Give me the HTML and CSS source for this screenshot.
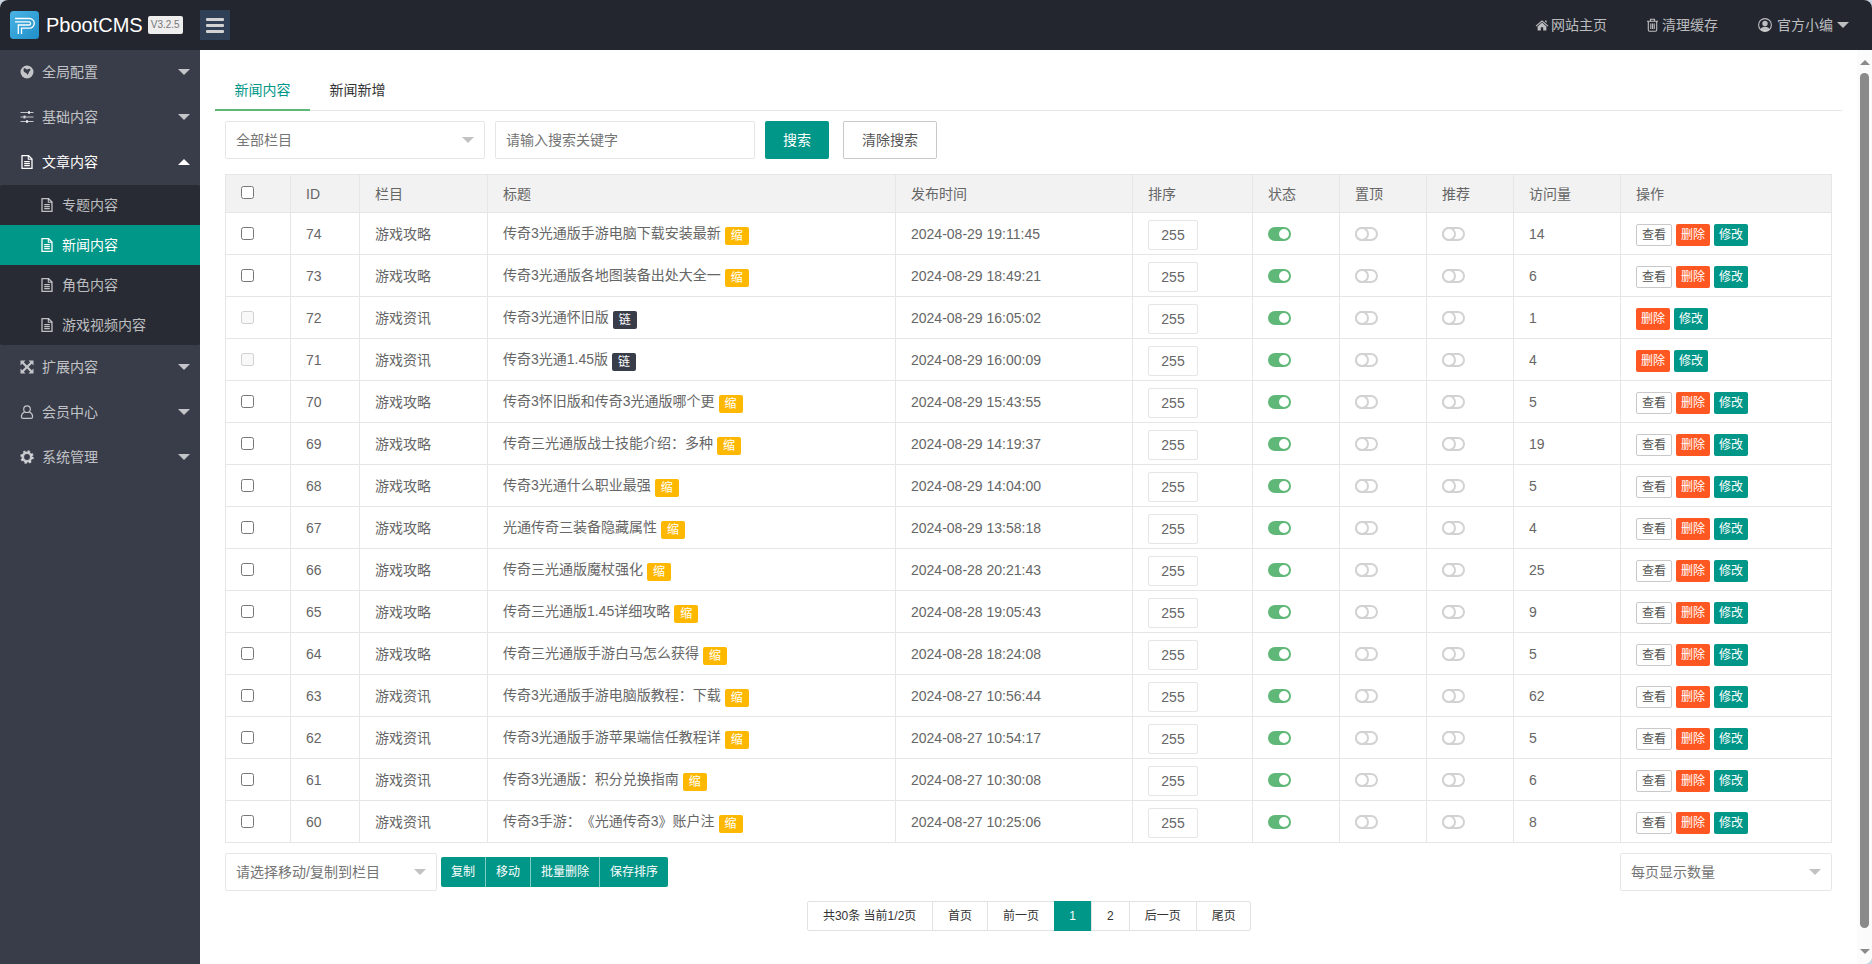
FILE: index.html
```html
<!DOCTYPE html>
<html lang="zh-CN">
<head>
<meta charset="utf-8">
<title>PbootCMS</title>
<link rel="stylesheet" href="styles.css">
</head>
<body>
<svg class="sprite" xmlns="http://www.w3.org/2000/svg">
  <symbol id="i-file" viewBox="0 0 14 14"><path d="M2 .7h6.6L12 4v9.3H2z" fill="none" stroke="currentColor" stroke-width="1.3"/><path d="M8.3.7v3.6H12M4.2 6.6h5.6M4.2 8.6h5.6M4.2 10.6h5.6" fill="none" stroke="currentColor" stroke-width="1.1"/></symbol>
  <symbol id="i-globe" viewBox="0 0 14 14"><circle cx="7" cy="7" r="6.5" fill="currentColor"/><path d="M3.600 3.600c1-.6 2-.2 2.600.5.300.5.900.4 1.500.1.800-.5 1.700-.8 2.500-.3.500 1-.1 2-.9 2.700-.4.400-.3 1-.6 1.500-.4.800-.9 1.500-1.500 1.800-.3-.7-.4-1.400-1-1.900C5.400 7.600 3.900 7.300 3.600 6z" fill="#393d49"/></symbol>
  <symbol id="i-sliders" viewBox="0 0 14 14"><path d="M.5 2.500h13M.5 7h13M.5 11.500h13" stroke="currentColor" stroke-width="1.100" fill="none"/><path d="M8 1h2v3H8zM3.500 5.500h2v3h-2zM6 10h2v3H6z" fill="currentColor"/></symbol>
  <symbol id="i-arrows" viewBox="0 0 14 14"><path d="M.5.500h5L3.800 2.200 7 5.400 10.200 2.200 8.500.500h5v5l-1.700-1.700L8.600 7l3.200 3.200 1.700-1.700v5h-5l1.700-1.700L7 8.600l-3.200 3.200 1.700 1.700h-5v-5l1.700 1.700L5.400 7 2.200 3.800.500 5.500z" fill="currentColor"/></symbol>
  <symbol id="i-user" viewBox="0 0 14 14"><circle cx="7" cy="4.200" r="3.300" fill="none" stroke="currentColor" stroke-width="1.200"/><path d="M4.300 7.200C2.400 8 1.400 9.600 1.400 11.400c0 1.200.6 1.900 1.700 1.900h7.800c1.100 0 1.700-.7 1.700-1.900 0-1.800-1-3.400-2.900-4.200" fill="none" stroke="currentColor" stroke-width="1.200"/></symbol>
  <symbol id="i-cog" viewBox="0 0 14 14"><circle cx="7" cy="7" r="4.200" fill="none" stroke="currentColor" stroke-width="2.600"/><circle cx="7" cy="7" r="5.800" fill="none" stroke="currentColor" stroke-width="2" stroke-dasharray="2.300 2.250"/></symbol>
  <symbol id="i-home" viewBox="0 0 14 14"><path d="M7 2.200 13.400 7.800l-.7.800L7 3.700 1.300 8.600l-.7-.8z" fill="currentColor"/><path d="M2.600 8.400 7 4.600l4.400 3.800V12.500H8.200V9.300H5.800v3.200H2.600zM10 2.500h1.600v2.400L10 3.600z" fill="currentColor"/></symbol>
  <symbol id="i-trash" viewBox="0 0 11 14"><path d="M0 3.200h11M3.500 3V1.300h4V3M1.300 3.500v8.300c0 .8.500 1.400 1.200 1.400h6c.7 0 1.200-.6 1.200-1.400V3.500M3.800 5.500v5.500M5.500 5.500v5.500M7.200 5.500v5.500" fill="none" stroke="currentColor" stroke-width="1.100"/></symbol>
  <symbol id="i-usercircle" viewBox="0 0 14 14"><circle cx="7" cy="7" r="6.400" fill="none" stroke="currentColor" stroke-width="1.100"/><circle cx="7" cy="5.500" r="2.700" fill="currentColor"/><path d="M2.600 11.400C3 9.600 4.300 8.700 7 8.700s4 .9 4.400 2.700C10.200 12.600 8.700 13.200 7 13.200s-3.200-.6-4.400-1.800z" fill="currentColor"/></symbol>
</svg>
<div class="app">
  <header class="topbar">
    <div class="brand">
      <svg class="logo" viewBox="0 0 29 28" xmlns="http://www.w3.org/2000/svg">
        <defs><linearGradient id="logo-grad" x1="0" y1="0" x2="1" y2="1"><stop offset="0" stop-color="#4bb4e6"/><stop offset="1" stop-color="#1f8fc8"/></linearGradient></defs>
        <rect width="29" height="28" rx="3.500" fill="url(#logo-grad)"/>
        <path d="M5 7.500h14.500a4.800 4.800 0 0 1 0 9.600H11.500V23M5 10.800h14a1.600 1.600 0 0 1 0 3.200H8.300v9" fill="none" stroke="#fff" stroke-width="1.300"/>
      </svg>
      <span class="brand-name">PbootCMS</span>
      <span class="brand-ver">V3.2.5</span>
    </div>
    <button class="menu-toggle" type="button" aria-label="菜单"><span></span><span></span><span></span></button>
    <nav class="top-links">
      <a class="top-link"><svg class="icon"><use href="#i-home"/></svg>网站主页</a>
      <a class="top-link trash"><svg class="icon"><use href="#i-trash"/></svg>清理缓存</a>
      <a class="top-link user"><svg class="icon"><use href="#i-usercircle"/></svg>官方小编<i class="caret"></i></a>
    </nav>
  </header>
  <div class="body-row">
    <aside class="sidebar">
      <a class="nav-item"><svg class="icon"><use href="#i-globe"/></svg><span>全局配置</span><i class="caret"></i></a>
      <a class="nav-item"><svg class="icon"><use href="#i-sliders"/></svg><span>基础内容</span><i class="caret"></i></a>
      <a class="nav-item open"><svg class="icon"><use href="#i-file"/></svg><span>文章内容</span><i class="caret up"></i></a>
      <div class="subnav">
        <a class="sub-item"><svg class="icon"><use href="#i-file"/></svg>专题内容</a>
        <a class="sub-item active"><svg class="icon"><use href="#i-file"/></svg>新闻内容</a>
        <a class="sub-item"><svg class="icon"><use href="#i-file"/></svg>角色内容</a>
        <a class="sub-item"><svg class="icon"><use href="#i-file"/></svg>游戏视频内容</a>
      </div>
      <a class="nav-item"><svg class="icon"><use href="#i-arrows"/></svg><span>扩展内容</span><i class="caret"></i></a>
      <a class="nav-item"><svg class="icon"><use href="#i-user"/></svg><span>会员中心</span><i class="caret"></i></a>
      <a class="nav-item"><svg class="icon"><use href="#i-cog"/></svg><span>系统管理</span><i class="caret"></i></a>
    </aside>
    <main class="main">
      <div class="tabs">
        <a class="tab active">新闻内容</a>
        <a class="tab">新闻新增</a>
      </div>
      <div class="panel">
        <form class="filters">
          <div class="select-box w-260"><span>全部栏目</span><i class="caret"></i></div>
          <input class="text-input" type="text" placeholder="请输入搜索关键字">
          <button class="btn btn-teal" type="button">搜索</button>
          <button class="btn btn-plain" type="button">清除搜索</button>
        </form>
        <table class="grid">
          <colgroup>
            <col class="c-check"><col class="c-id"><col class="c-cat"><col class="c-title"><col class="c-date"><col class="c-sort"><col class="c-flag"><col class="c-flag"><col class="c-flag"><col class="c-views"><col class="c-act">
          </colgroup>
          <thead>
            <tr><th><input type="checkbox"></th><th>ID</th><th>栏目</th><th>标题</th><th>发布时间</th><th>排序</th><th>状态</th><th>置顶</th><th>推荐</th><th>访问量</th><th>操作</th></tr>
          </thead>
          <tbody>
            <tr><td><input type="checkbox"></td><td>74</td><td>游戏攻略</td><td>传奇3光通版手游电脑下载安装最新<b class="badge amber">缩</b></td><td>2024-08-29 19:11:45</td><td><input class="sort" value="255"></td><td><i class="toggle on"></i></td><td><i class="toggle"></i></td><td><i class="toggle"></i></td><td>14</td><td><div class="ops"><a class="mini plain">查看</a><a class="mini red">删除</a><a class="mini teal">修改</a></div></td></tr>
            <tr><td><input type="checkbox"></td><td>73</td><td>游戏攻略</td><td>传奇3光通版各地图装备出处大全一<b class="badge amber">缩</b></td><td>2024-08-29 18:49:21</td><td><input class="sort" value="255"></td><td><i class="toggle on"></i></td><td><i class="toggle"></i></td><td><i class="toggle"></i></td><td>6</td><td><div class="ops"><a class="mini plain">查看</a><a class="mini red">删除</a><a class="mini teal">修改</a></div></td></tr>
            <tr><td><input type="checkbox" disabled></td><td>72</td><td>游戏资讯</td><td>传奇3光通怀旧版<b class="badge dark">链</b></td><td>2024-08-29 16:05:02</td><td><input class="sort" value="255"></td><td><i class="toggle on"></i></td><td><i class="toggle"></i></td><td><i class="toggle"></i></td><td>1</td><td><div class="ops"><a class="mini red">删除</a><a class="mini teal">修改</a></div></td></tr>
            <tr><td><input type="checkbox" disabled></td><td>71</td><td>游戏资讯</td><td>传奇3光通1.45版<b class="badge dark">链</b></td><td>2024-08-29 16:00:09</td><td><input class="sort" value="255"></td><td><i class="toggle on"></i></td><td><i class="toggle"></i></td><td><i class="toggle"></i></td><td>4</td><td><div class="ops"><a class="mini red">删除</a><a class="mini teal">修改</a></div></td></tr>
            <tr><td><input type="checkbox"></td><td>70</td><td>游戏攻略</td><td>传奇3怀旧版和传奇3光通版哪个更<b class="badge amber">缩</b></td><td>2024-08-29 15:43:55</td><td><input class="sort" value="255"></td><td><i class="toggle on"></i></td><td><i class="toggle"></i></td><td><i class="toggle"></i></td><td>5</td><td><div class="ops"><a class="mini plain">查看</a><a class="mini red">删除</a><a class="mini teal">修改</a></div></td></tr>
            <tr><td><input type="checkbox"></td><td>69</td><td>游戏攻略</td><td>传奇三光通版战士技能介绍：多种<b class="badge amber">缩</b></td><td>2024-08-29 14:19:37</td><td><input class="sort" value="255"></td><td><i class="toggle on"></i></td><td><i class="toggle"></i></td><td><i class="toggle"></i></td><td>19</td><td><div class="ops"><a class="mini plain">查看</a><a class="mini red">删除</a><a class="mini teal">修改</a></div></td></tr>
            <tr><td><input type="checkbox"></td><td>68</td><td>游戏攻略</td><td>传奇3光通什么职业最强<b class="badge amber">缩</b></td><td>2024-08-29 14:04:00</td><td><input class="sort" value="255"></td><td><i class="toggle on"></i></td><td><i class="toggle"></i></td><td><i class="toggle"></i></td><td>5</td><td><div class="ops"><a class="mini plain">查看</a><a class="mini red">删除</a><a class="mini teal">修改</a></div></td></tr>
            <tr><td><input type="checkbox"></td><td>67</td><td>游戏攻略</td><td>光通传奇三装备隐藏属性<b class="badge amber">缩</b></td><td>2024-08-29 13:58:18</td><td><input class="sort" value="255"></td><td><i class="toggle on"></i></td><td><i class="toggle"></i></td><td><i class="toggle"></i></td><td>4</td><td><div class="ops"><a class="mini plain">查看</a><a class="mini red">删除</a><a class="mini teal">修改</a></div></td></tr>
            <tr><td><input type="checkbox"></td><td>66</td><td>游戏攻略</td><td>传奇三光通版魔杖强化<b class="badge amber">缩</b></td><td>2024-08-28 20:21:43</td><td><input class="sort" value="255"></td><td><i class="toggle on"></i></td><td><i class="toggle"></i></td><td><i class="toggle"></i></td><td>25</td><td><div class="ops"><a class="mini plain">查看</a><a class="mini red">删除</a><a class="mini teal">修改</a></div></td></tr>
            <tr><td><input type="checkbox"></td><td>65</td><td>游戏攻略</td><td>传奇三光通版1.45详细攻略<b class="badge amber">缩</b></td><td>2024-08-28 19:05:43</td><td><input class="sort" value="255"></td><td><i class="toggle on"></i></td><td><i class="toggle"></i></td><td><i class="toggle"></i></td><td>9</td><td><div class="ops"><a class="mini plain">查看</a><a class="mini red">删除</a><a class="mini teal">修改</a></div></td></tr>
            <tr><td><input type="checkbox"></td><td>64</td><td>游戏攻略</td><td>传奇三光通版手游白马怎么获得<b class="badge amber">缩</b></td><td>2024-08-28 18:24:08</td><td><input class="sort" value="255"></td><td><i class="toggle on"></i></td><td><i class="toggle"></i></td><td><i class="toggle"></i></td><td>5</td><td><div class="ops"><a class="mini plain">查看</a><a class="mini red">删除</a><a class="mini teal">修改</a></div></td></tr>
            <tr><td><input type="checkbox"></td><td>63</td><td>游戏资讯</td><td>传奇3光通版手游电脑版教程：下载<b class="badge amber">缩</b></td><td>2024-08-27 10:56:44</td><td><input class="sort" value="255"></td><td><i class="toggle on"></i></td><td><i class="toggle"></i></td><td><i class="toggle"></i></td><td>62</td><td><div class="ops"><a class="mini plain">查看</a><a class="mini red">删除</a><a class="mini teal">修改</a></div></td></tr>
            <tr><td><input type="checkbox"></td><td>62</td><td>游戏资讯</td><td>传奇3光通版手游苹果端信任教程详<b class="badge amber">缩</b></td><td>2024-08-27 10:54:17</td><td><input class="sort" value="255"></td><td><i class="toggle on"></i></td><td><i class="toggle"></i></td><td><i class="toggle"></i></td><td>5</td><td><div class="ops"><a class="mini plain">查看</a><a class="mini red">删除</a><a class="mini teal">修改</a></div></td></tr>
            <tr><td><input type="checkbox"></td><td>61</td><td>游戏资讯</td><td>传奇3光通版：积分兑换指南<b class="badge amber">缩</b></td><td>2024-08-27 10:30:08</td><td><input class="sort" value="255"></td><td><i class="toggle on"></i></td><td><i class="toggle"></i></td><td><i class="toggle"></i></td><td>6</td><td><div class="ops"><a class="mini plain">查看</a><a class="mini red">删除</a><a class="mini teal">修改</a></div></td></tr>
            <tr><td><input type="checkbox"></td><td>60</td><td>游戏资讯</td><td>传奇3手游：《光通传奇3》账户注<b class="badge amber">缩</b></td><td>2024-08-27 10:25:06</td><td><input class="sort" value="255"></td><td><i class="toggle on"></i></td><td><i class="toggle"></i></td><td><i class="toggle"></i></td><td>8</td><td><div class="ops"><a class="mini plain">查看</a><a class="mini red">删除</a><a class="mini teal">修改</a></div></td></tr>
          </tbody>
        </table>
        <div class="actions">
          <div class="select-box w-212"><span>请选择移动/复制到栏目</span><i class="caret"></i></div>
          <div class="btn-group"><a>复制</a><a>移动</a><a>批量删除</a><a>保存排序</a></div>
          <div class="select-box w-212 push"><span>每页显示数量</span><i class="caret"></i></div>
        </div>
        <div class="pager-row">
          <div class="pager"><a>共30条 当前1/2页</a><a>首页</a><a>前一页</a><a class="current">1</a><a>2</a><a>后一页</a><a>尾页</a></div>
        </div>
      </div>
    </main>
    <div class="scrollbar" aria-hidden="true"><i class="arrow-up"></i><div class="thumb"></div><i class="arrow-down"></i></div>
  </div>
</div>
</body>
</html>
```

FILE: styles.css
```css
*, *::before, *::after { box-sizing: border-box; }
html, body { height: 100%; }
body {
  margin: 0;
  background: #c9d6e2;
  color: #666;
  font: 14px/20px "Liberation Sans", "Noto Sans CJK SC", sans-serif;
  text-spacing-trim: space-all;
  overflow: hidden;
}
a { color: inherit; text-decoration: none; }
.sprite { display: none; }
.app {
  height: 964px;
  display: flex;
  flex-direction: column;
  background: #fff;
  border-radius: 8px 8px 8px 0;
  overflow: hidden;
}
.icon { width: 14px; height: 14px; flex: none; fill: currentColor; }
.caret {
  width: 12px; height: 6px; flex: none;
  border: 6px solid transparent;
  border-bottom-width: 0;
  border-top-color: currentColor;
}
.caret.up { border-top-width: 0; border-bottom-width: 6px; border-top-color: transparent; border-bottom-color: currentColor; }

/* top bar */
.topbar {
  height: 50px; flex: none;
  display: flex; align-items: center;
  background: #23262e;
  color: rgba(255,255,255,.7);
  padding-right: 23px;
}
.brand { width: 200px; display: flex; align-items: center; padding-left: 10px; }
.logo { width: 29px; height: 28px; flex: none; }
.brand-name { margin-left: 7px; font-size: 20px; line-height: 28px; color: #fff; }
.brand-ver {
  margin-left: 5px; width: 35px; height: 18px;
  background: #eee; color: #777; border-radius: 2px;
  font-size: 10px; line-height: 18px; text-align: center;
}
.menu-toggle {
  width: 30px; height: 30px; padding: 0 6px; border: 0;
  background: #2f4056;
  display: flex; flex-direction: column; justify-content: center; gap: 3px;
}
.menu-toggle span { display: block; height: 3px; background: #d2d2d2; border-radius: 1px; }
.top-links { margin-left: auto; display: flex; align-items: center; gap: 40px; }
.top-link { display: flex; align-items: center; gap: 2px; }
.top-link .caret { margin-left: 2px; }
.top-link.user .icon { margin-right: 3px; }
.top-link.trash { gap: 4px; }
.top-link.trash .icon { width: 11px; }

/* layout */
.body-row { flex: 1; min-height: 0; display: flex; }

/* sidebar */
.sidebar { width: 200px; flex: none; background: #393d49; color: rgba(255,255,255,.7); }
.nav-item {
  height: 45px; display: flex; align-items: center;
  padding: 0 10px 2px 20px;
}
.nav-item span { margin-left: 8px; flex: 1; }
.nav-item.open { color: #fff; }
.subnav { background: #282b33; border-radius: 2px; }
.sub-item { height: 40px; display: flex; align-items: center; gap: 8px; padding-left: 40px; }
.sub-item.active { background: #009688; color: #fff; }

/* main */
.main { flex: 1; min-width: 0; padding: 20px 15px 0; }
.tabs { display: flex; height: 41px; border-bottom: 1px solid #e6e6e6; }
.tab { height: 41px; padding: 0 19.5px; line-height: 40px; color: #333; }
.tab.active { color: #009688; border-bottom: 2px solid #5fb878; }
.panel { padding: 10px 10px 0; }

.filters { display: flex; }
.select-box {
  height: 38px; display: flex; align-items: center; justify-content: space-between;
  padding: 0 10px;
  background: #fff; border: 1px solid #e6e6e6; border-radius: 2px;
  color: #757575; font-size: 14px;
}
.select-box .caret { color: #c2c2c2; }
.w-260 { width: 260px; }
.w-212 { width: 212px; }
.text-input {
  width: 260px; height: 38px; margin-left: 10px; padding: 0 10px;
  border: 1px solid #e6e6e6; border-radius: 2px; outline: 0;
  font: inherit; color: #666;
}
.text-input::placeholder { color: #757575; opacity: 1; }
.btn { height: 38px; padding: 0 18px; border-radius: 2px; font: inherit; }
.btn-teal { margin-left: 10px; width: 64px; padding: 0; background: #009688; border: 0; color: #fff; }
.btn-plain { margin-left: 14px; width: 94px; padding: 0; background: #fff; border: 1px solid #c9c9c9; color: #555; }

/* table */
.grid {
  width: 1606px; margin-top: 15px;
  table-layout: fixed; border-collapse: collapse;
  color: #666;
}
.c-check { width: 65px; }
.c-id { width: 69px; }
.c-cat { width: 128px; }
.c-title { width: 408px; }
.c-date { width: 237px; }
.c-sort { width: 120px; }
.c-flag { width: 87px; }
.c-views { width: 107px; }
.c-act { width: 211px; }
.grid th, .grid td {
  padding: 0 15px;
  border: 1px solid #e6e6e6;
  text-align: left; font-weight: 400;
  white-space: nowrap;
}
.grid th { height: 38px; background: #f2f2f2; }
.grid td { height: 42px; }
.grid th input[type=checkbox] { display: block; margin: 0 3px 2px 0; }
.grid td input[type=checkbox] { display: block; margin: 0 3px 1px 0; }
.badge {
  display: inline-block; height: 18px; margin-left: 4px; padding: 0 6px;
  border-radius: 2px; color: #fff;
  font-size: 12px; font-weight: 400; line-height: 18px;
  vertical-align: -2px;
}
.amber { background: #ffb800; }
.dark { background: #393d49; }
.sort {
  display: block; width: 50px; height: 30px; margin-top: 2px; padding: 0;
  border: 1px solid #e6e6e6; border-radius: 2px; outline: 0;
  font: inherit; color: #666; text-align: center;
}
.toggle {
  display: flex; width: 23px; height: 14px; border-radius: 7px;
  border: 2px solid #d2d2d2; background: #fff;
}
.toggle::after {
  content: ""; flex: none; width: 14px; height: 14px; margin: -2px;
  border: 2px solid #d2d2d2; border-radius: 50%; background: #fff;
}
.toggle.on { border: 0; background: #5fb878; justify-content: flex-end; align-items: center; padding-right: 2px; }
.toggle.on::after { width: 10px; height: 10px; margin: 0; border: 0; }
.ops { display: flex; gap: 4px; margin-top: 2px; }
.mini {
  display: block; height: 22px; padding: 0 5px;
  border-radius: 2px; font-size: 12px; line-height: 22px; color: #fff;
}
.mini.plain { width: 36px; padding: 0; text-align: center; border: 1px solid #c9c9c9; line-height: 20px; color: #555; }
.mini.red { width: 34px; background: #ff5722; }
.mini.teal { width: 34px; background: #009688; }

/* actions */
.actions { display: flex; align-items: center; margin-top: 10px; }
.btn-group { display: flex; margin-left: 4px; height: 30px; border-radius: 2px; overflow: hidden; }
.btn-group a {
  padding: 0 10px; background: #009688; color: #fff;
  font-size: 12px; line-height: 30px;
  border-left: 1px solid rgba(255,255,255,.5);
}
.btn-group a:first-child { border-left: 0; }
.push { margin-left: auto; }

/* pager */
.pager-row { display: flex; justify-content: center; margin-top: 10px; padding-left: 1px; }
.pager { display: flex; height: 30px; border: 1px solid #e2e2e2; border-radius: 2px; color: #333; font-size: 12px; }
.pager a { padding: 0 15px; line-height: 28px; border-left: 1px solid #e2e2e2; }
.pager a:first-child { border-left: 0; padding-right: 15.7px; }
.pager a:last-child { padding-right: 14.3px; }
.pager a.current { margin: -1px 0; height: 30px; line-height: 30px; background: #009688; color: #fff; border-left: 0; width: 37px; text-align: center; }

/* scrollbar */
.scrollbar {
  width: 15px; flex: none; background: #fbfbfb;
  display: flex; flex-direction: column; align-items: center;
  padding: 10px 0;
}
.thumb { width: 9px; flex: 1; margin: 8px 0 21px; background: #8a8a8a; border-radius: 5px; }
.arrow-up, .arrow-down { width: 10px; height: 5px; border: 5px solid transparent; flex: none; }
.arrow-up { border-top: 0; border-bottom-color: #8a8a8a; }
.arrow-down { border-bottom: 0; border-top-color: #8a8a8a; }
```
